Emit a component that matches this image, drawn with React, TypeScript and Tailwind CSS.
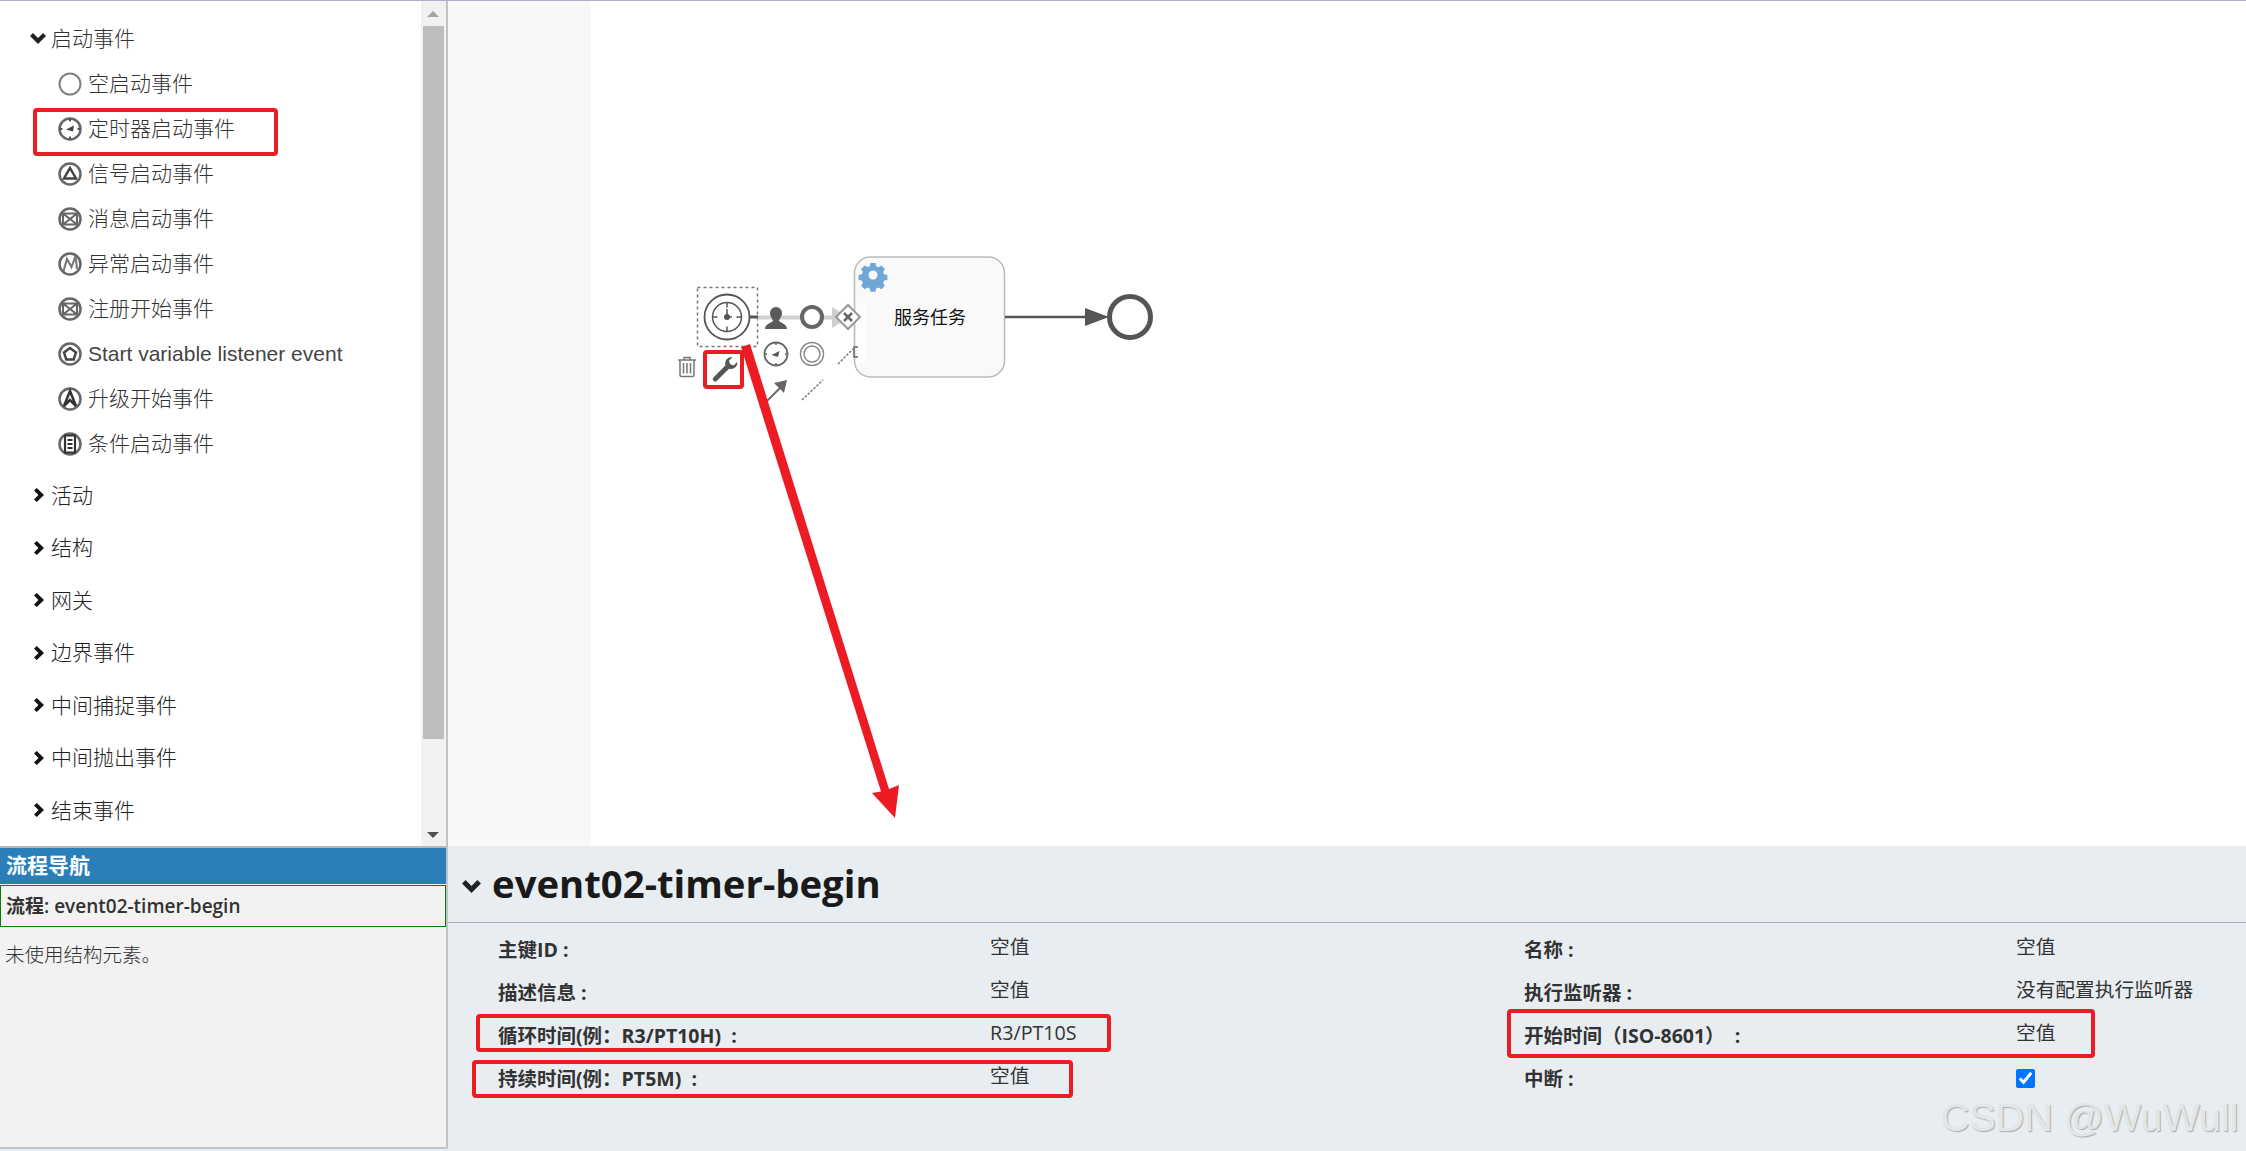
const FONT = "font-['Open_Sans','Noto_Sans_CJK_SC',sans-serif]";

function ChevronRight() {
  return (
    <svg width="12" height="14" viewBox="0 0 12 14" fill="#111" className="shrink-0">
      <path d="M2 2.500L4.800 0 12 7l-7.200 7L2 11.500 6.500 7z" />
    </svg>
  );
}

function ChevronDown({ width, height }: { width: number; height: number }) {
  return (
    <svg width={width} height={height} viewBox="0 0 16 11" fill="#222" className="shrink-0">
      <path d="M0 3l3-3 5 5 5-5 3 3-8 8z" />
    </svg>
  );
}

function EventIcon({ kind }: { kind: string }) {
  return (
    <svg width="24" height="24" viewBox="0 0 24 24" fill="none" stroke="#555" className="shrink-0 blur-[0.4px]">
      <circle cx="12" cy="12" r="10.500" strokeWidth={kind === "none" ? 2 : 2.500} stroke={kind === "none" ? "#808080" : "#666"} />
      {kind === "timer" && (
        <g strokeWidth="2">
          <path d="M12 1.500v3M12 19.500v3M1.500 12h3M19.500 12h3" />
          <path d="M8 12.500l8-4-1 6z" fill="#444" stroke="none" />
        </g>
      )}
      {kind === "signal" && <path d="M12 6l6 10.500H6z" strokeWidth="2.500" stroke="#444" />}
      {kind === "message" && <path d="M5 6.500h14v11H5zM5 6.500l7 5.500 7-5.500M5 17.500l7-5.500 7 5.500" strokeWidth="2.100" stroke="#666" />}
      {kind === "error" && <path d="M5.500 19l3.500-12 4.500 8 4-11 1.500 13" strokeWidth="2.100" stroke="#777" />}
      {kind === "variable" && <path d="M12 6l6 4.500-2.300 7H8.300L6 10.500z" strokeWidth="2.500" stroke="#444" />}
      {kind === "escalation" && <path d="M12 4l6 15-6-6-6 6z" strokeWidth="2.500" stroke="#333" />}
      {kind === "condition" && <path d="M7 3.500h10v17H7zM9.500 8h5M9.500 12h5M9.500 16h5" strokeWidth="2.200" stroke="#333" />}
    </svg>
  );
}

const startEvents = [
  { kind: "none", label: "空启动事件" },
  { kind: "timer", label: "定时器启动事件" },
  { kind: "signal", label: "信号启动事件" },
  { kind: "message", label: "消息启动事件" },
  { kind: "error", label: "异常启动事件" },
  { kind: "message", label: "注册开始事件" },
  { kind: "variable", label: "Start variable listener event" },
  { kind: "escalation", label: "升级开始事件" },
  { kind: "condition", label: "条件启动事件" },
];

const groups = ["活动", "结构", "网关", "边界事件", "中间捕捉事件", "中间抛出事件", "结束事件"];

const properties = [
  ["主键ID :", "空值", "名称 :", "空值"],
  ["描述信息 :", "空值", "执行监听器 :", "没有配置执行监听器"],
  ["循环时间(例：R3/PT10H)  :", "R3/PT10S", "开始时间（ISO-8601）  :", "空值"],
  ["持续时间(例：PT5M)  :", "空值", "中断 :", ""],
];

function Palette() {
  return (
    <div className="flex h-[847px] shrink-0 border-b-2 border-[#b4b8bb] bg-white">
      <div className="flex-1 pt-[15px] text-[21px] font-light text-[#333]">
        <div className="flex h-[45px] items-center gap-[5px] pl-[30px]">
          <ChevronDown width={16} height={11} />
          <span>启动事件</span>
        </div>
        {startEvents.map((item) => (
          <div key={item.label} className="flex h-[45px] items-center gap-[6px] pl-[58px]">
            <EventIcon kind={item.kind} />
            <span className={item.label.startsWith("Start") ? "font-['Liberation_Sans',sans-serif] text-[21px] font-normal text-[#444]" : ""}>{item.label}</span>
          </div>
        ))}
        <div className="mt-[3px]">
          {groups.map((group) => (
            <div key={group} className="flex h-[52.500px] items-center gap-[7px] pl-[32px] text-[#222]">
              <ChevronRight />
              <span>{group}</span>
            </div>
          ))}
        </div>
      </div>
      {/* scrollbar */}
      <div className="flex w-[25px] flex-col items-center bg-[#f1f1f1] pr-[1px]">
        <div className="flex h-[25px] items-center">
          <div className="h-0 w-0 border-x-[6px] border-b-[6px] border-x-transparent border-b-[#a3a3a3]" />
        </div>
        <div className="h-[713px] w-[21px] bg-[#bdbdbd]" />
        <div className="flex flex-1 items-end pb-[8px]">
          <div className="h-0 w-0 border-x-[6px] border-t-[6px] border-x-transparent border-t-[#505050]" />
        </div>
      </div>
    </div>
  );
}

function ProcessNav() {
  return (
    <div className="flex flex-1 flex-col bg-[#f2f2f2]">
      <div className="flex h-[36px] items-center bg-[#2a7fb8] pl-[6px] text-[21px] font-bold text-white">流程导航</div>
      <div className="mt-[1px] flex h-[42px] items-center border border-[#008000] pl-[5px] text-[19px] font-semibold text-[#333]">
        流程: event02-timer-begin
      </div>
      <div className="mt-[15px] pl-[5px] text-[19.500px] leading-[26px] font-light text-[#333]">未使用结构元素。</div>
    </div>
  );
}

function Diagram() {
  return (
    <svg viewBox="448 1 1798 845" className="absolute inset-0 h-full w-full">
      {/* task */}
      <rect x="854.500" y="257" width="150" height="120" rx="16" fill="#f9f9f9" stroke="#bbb" strokeWidth="1.500" />
      <rect x="856" y="303" width="10" height="60" fill="#fff" opacity="0.7" />
      {/* gear */}
      <g transform="translate(873 275)" fill="#6fa8d6">
        <path
          fillRule="evenodd"
          d="M-2.500-12h5l.7 3.300 2.300 1 2.900-1.800 3.500 3.500-1.800 2.900 1 2.300 3.300.7v5l-3.300.7-1 2.300 1.800 2.900-3.500 3.500-2.900-1.800-2.300 1-.7 3.300h-5l-.7-3.300-2.300-1-2.900 1.800-3.500-3.500 1.800-2.900-1-2.300-3.300-.7v-5l3.300-.7 1-2.300-1.800-2.900 3.500-3.500 2.900 1.800 2.300-1zM0-4.500a4.500 4.500 0 1 0 .01 0z"
        />
      </g>
      <text x="930" y="324" textAnchor="middle" fontSize="18" fill="#111" fontFamily="'Noto Sans CJK SC',sans-serif">服务任务</text>

      {/* start event with timer */}
      <rect x="697.500" y="287.500" width="60" height="59" fill="none" stroke="#777" strokeWidth="1.500" strokeDasharray="3 3" />
      <circle cx="727" cy="317" r="22.500" fill="#fff" stroke="#555" strokeWidth="1.800" />
      <circle cx="727" cy="317" r="14.500" fill="none" stroke="#555" strokeWidth="1.500" />
      <path d="M727 302.500v5M727 326.500v5M712.500 317h5M736.500 317h5M727 309v8h5" fill="none" stroke="#555" strokeWidth="1.500" />
      <circle cx="727" cy="317" r="3" fill="#555" />

      {/* flow behind the context pad */}
      <path d="M757 317.500h80" stroke="#cfcfcf" strokeWidth="4" />
      <path d="M750 317h8" stroke="#555" strokeWidth="3" />
      <path d="M832 307l17 10.500-17 10.500z" fill="#cfcfcf" />

      {/* context pad */}
      <path d="M765 329c0-5 6-6 8-8 0-2-3-4-3-8a6 6 0 0 1 12 0c0 4-3 6-3 8 2 2 8 3 8 8z" fill="#5a5a5a" />
      <circle cx="812" cy="317" r="10" fill="#fff" stroke="#666" strokeWidth="4" />
      <path d="M848 305l12 12-12 12-12-12z" fill="#fff" stroke="#999" strokeWidth="2" />
      <path d="M844 313l8 8M852 313l-8 8" stroke="#666" strokeWidth="2.500" />
      <circle cx="776" cy="354" r="11.500" fill="none" stroke="#666" strokeWidth="1.800" />
      <path d="M776 342.500v2.500M776 363v2.500M764.500 354h2.500M785 354h2.500" stroke="#666" strokeWidth="1.500" />
      <path d="M771.500 355l8-4-1.500 6z" fill="#555" />
      <circle cx="812" cy="354" r="11.500" fill="none" stroke="#888" strokeWidth="1.500" />
      <circle cx="812" cy="354" r="8" fill="none" stroke="#888" strokeWidth="1.500" />
      <path d="M838 364l15-15" stroke="#777" strokeWidth="1.500" strokeDasharray="2.500 1.500" />
      <path d="M858 347h-4v10h4" fill="none" stroke="#666" strokeWidth="1.500" />
      {/* trash */}
      <g fill="none" stroke="#777" strokeWidth="1.500">
        <path d="M678 360h18M684 360v-2.500h6v2.500M680 360v15a1.500 1.500 0 0 0 1.500 1.500h11a1.500 1.500 0 0 0 1.500-1.500v-15" />
        <path d="M683.500 363v10.500M687 363v10.500M690.500 363v10.500" />
      </g>
      {/* wrench */}
      <path
        d="M713 378l12.500-12.800c-1.300-4.200 2-8.400 7-8.200l-3.600 3.700 1.200 3.600 3.600 1.100 3.700-3.600c.3 5-4 8.200-8.300 7l-12.700 12.500a2.500 2.500 0 0 1-3.400-3.300z"
        fill="#555"
      />
      <path d="M766 402l16-16" stroke="#666" strokeWidth="1.800" />
      <path d="M787 380l-3 13-10-10z" fill="#666" />
      <path d="M802 400l21-20" stroke="#777" strokeWidth="1.500" strokeDasharray="2.500 1.500" />

      {/* outgoing flow and end event */}
      <path d="M1005 317h82" stroke="#555" strokeWidth="2.500" />
      <path d="M1085 308l24 9-24 9z" fill="#555" />
      <circle cx="1130" cy="317" r="20.500" fill="#fff" stroke="#555" strokeWidth="5" />
    </svg>
  );
}

function Properties() {
  return (
    <div className={`flex-1 bg-[#e8edf1] ${FONT}`}>
      <div className="flex h-[77px] items-center gap-[11px] border-b border-[#a9adb8] pl-[14px]">
        <span className="mt-[4px]">
          <ChevronDown width={19} height={13} />
        </span>
        <h1 className="text-[38.300px] font-bold text-[#1a1a1a]">event02-timer-begin</h1>
      </div>
      <div className="grid grid-cols-[492px_534px_492px_1fr] auto-rows-[43px] pl-[50px] pt-[9px] text-[19.500px] text-[#333]">
        {properties.map((row) => (
          <div key={row[0]} className="contents">
            <div className="mt-[3px] font-bold whitespace-pre">{row[0]}</div>
            <div className="text-[19.700px]">{row[1]}</div>
            <div className="mt-[3px] font-bold whitespace-pre">{row[2]}</div>
            <div className="text-[19.700px]">
              {row[3] || <input type="checkbox" defaultChecked className="mt-[8px] h-[19px] w-[19px] accent-[#0075ff]" />}
            </div>
          </div>
        ))}
      </div>
    </div>
  );
}

export default function App() {
  return (
    <div className={`relative flex h-[1151px] w-[2246px] overflow-hidden border-t border-[#a9b1c6] bg-[#e8edf1] ${FONT}`}>
      <div className="flex h-[1148px] w-[448px] shrink-0 flex-col border-r-2 border-b-2 border-[#c0c4c7]">
        <Palette />
        <ProcessNav />
      </div>
      <div className="flex flex-1 flex-col">
        <div className="relative flex h-[845px] shrink-0 bg-white">
          <div className="w-[143px] bg-[#f8f8f8]" />
          <Diagram />
        </div>
        <Properties />
      </div>

      {/* red screenshot annotations */}
      <div className="absolute left-[33px] top-[107px] h-[48px] w-[245px] rounded-sm border-[4.500px] border-[#ed1c24]" />
      <div className="absolute left-[703px] top-[349px] h-[39px] w-[41px] rounded-sm border-[4.500px] border-[#ed1c24]" />
      <div className="absolute left-[476px] top-[1013px] h-[38px] w-[635px] rounded-sm border-[4.500px] border-[#ed1c24]" />
      <div className="absolute left-[472px] top-[1059px] h-[38px] w-[601px] rounded-sm border-[4.500px] border-[#ed1c24]" />
      <div className="absolute left-[1507px] top-[1008px] h-[49px] w-[588px] rounded-sm border-[4.500px] border-[#ed1c24]" />
      <svg className="absolute left-0 top-0 h-[1151px] w-[2246px]" viewBox="0 1 2246 1151">
        <path d="M741 347l9-3 139 445 10-4-4 33-23-25 9-1.500z" fill="#ed1c24" />
      </svg>

      <div className="absolute left-[1941px] top-[1087px] font-['Liberation_Sans',sans-serif] text-[39.500px] whitespace-nowrap text-[#e2e6e9] [text-shadow:1px_1px_1px_#aaa]">
        CSDN @WuWull
      </div>
    </div>
  );
}
